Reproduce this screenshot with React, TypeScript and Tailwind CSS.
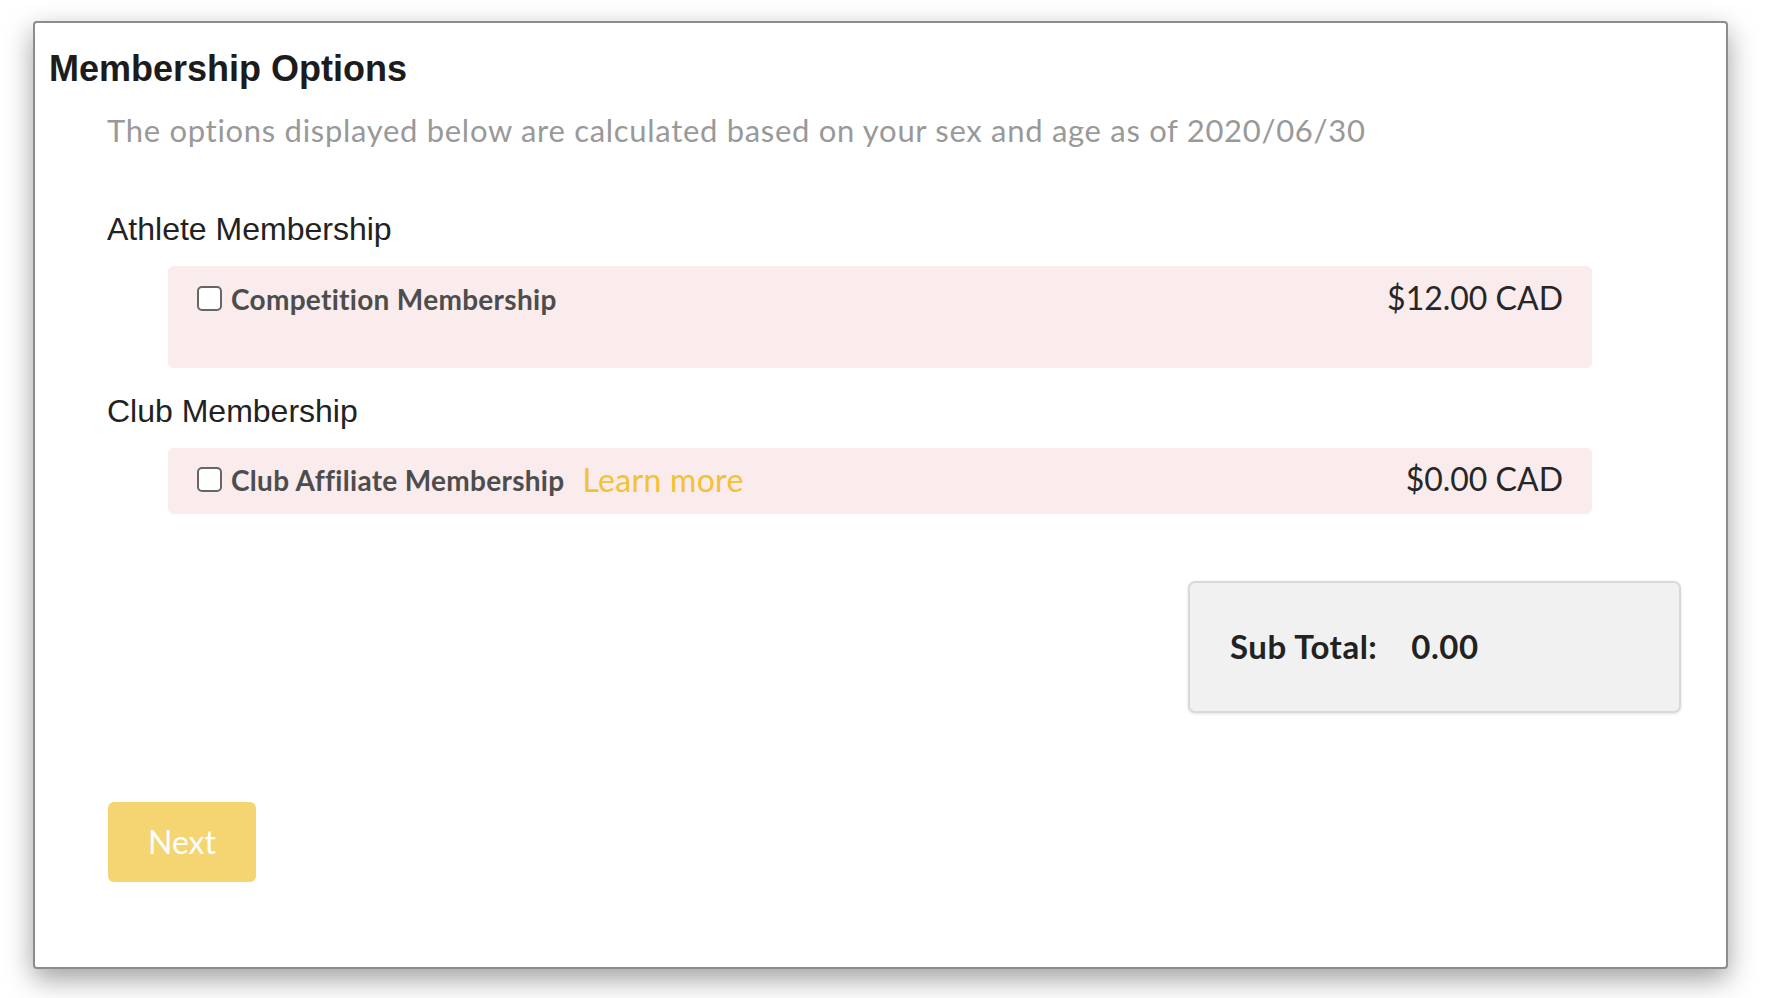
import React, { useState } from "react";

type Option = {
  id: string;
  label: string;
  price: number;
  learnMore?: boolean;
};

const groups: { title: string; options: Option[]; tall?: boolean }[] = [
  {
    title: "Athlete Membership",
    tall: true,
    options: [{ id: "competition", label: "Competition Membership", price: 12 }],
  },
  {
    title: "Club Membership",
    options: [
      { id: "club-affiliate", label: "Club Affiliate Membership", price: 0, learnMore: true },
    ],
  },
];

function Checkbox({ checked, onChange }: { checked: boolean; onChange: () => void }) {
  return (
    <button
      type="button"
      onClick={onChange}
      className="w-[25px] h-[25px] shrink-0 rounded-[5px] border-2 border-[#666] bg-white flex items-center justify-center"
    >
      {checked && (
        <svg width="16" height="16" viewBox="0 0 16 16" fill="none">
          <path d="M3 8.5l3 3 7-7" stroke="#444" strokeWidth="2.2" strokeLinecap="round" strokeLinejoin="round" />
        </svg>
      )}
    </button>
  );
}

export default function App() {
  const [selected, setSelected] = useState<string[]>([]);

  const toggle = (id: string) =>
    setSelected((prev) => (prev.includes(id) ? prev.filter((x) => x !== id) : [...prev, id]));

  const subTotal = groups
    .flatMap((g) => g.options)
    .filter((o) => selected.includes(o.id))
    .reduce((sum, o) => sum + o.price, 0);

  return (
    <div className="min-h-screen bg-white pt-[21px] pl-[33px] pr-[46px] pb-[29px]">
      <div className="w-[1695px] h-[948px] border-2 border-[#8c8c8c] rounded-[4px] bg-white shadow-[0_10px_28px_rgba(0,0,0,0.38)]">
        {/* Header */}
        <h2 className="pl-[14px] pt-[24px] text-[36px] leading-[44px] font-bold text-[#1c1c1c] font-['Liberation_Sans',Arial,sans-serif]">
          Membership Options
        </h2>

        <div className="pl-[72px]">
          <p className="mt-[19px] text-[31px] leading-[40px] tracking-[0.7px] text-[#999] font-['Lato',sans-serif]">
            The options displayed below are calculated based on your sex and age as of 2020/06/30
          </p>

          {groups.map((group, gi) => (
            <div key={group.title} className={gi === 0 ? "mt-[59px]" : "mt-[23px]"}>
              <h3 className="text-[32px] leading-[40px] text-[#222] font-['Liberation_Sans',Arial,sans-serif]">
                {group.title}
              </h3>

              {group.options.map((opt) => (
                <div
                  key={opt.id}
                  className={
                    "ml-[61px] mr-[134px] mt-[17px] rounded-[6px] bg-[#faebec] px-[29px] " +
                    (group.tall ? "h-[102px] pt-[15px]" : "h-[66px] pt-[14px]")
                  }
                >
                  <div className="flex items-center h-[34px] font-['Lato',sans-serif]">
                    <Checkbox checked={selected.includes(opt.id)} onChange={() => toggle(opt.id)} />
                    <span className="ml-[9px] text-[28px] tracking-[0.3px] font-bold text-[#4d4d4d] mt-[2px]">
                      {opt.label}
                    </span>
                    {opt.learnMore && (
                      <a href="#" className="ml-[18px] text-[32px] tracking-[0.3px] text-[#f2c233] mt-[1px]">
                        Learn more
                      </a>
                    )}
                    <span className="ml-auto text-[32px] text-[#262626]">
                      ${opt.price.toFixed(2)} CAD
                    </span>
                  </div>
                </div>
              ))}
            </div>
          ))}
        </div>

        {/* Totals */}
        <div className="flex justify-end mr-[45px] mt-[67px]">
          <div className="w-[493px] h-[132px] rounded-[7px] border-2 border-[#d9d9d9] bg-[#f1f1f1] shadow-[0_1px_3px_rgba(0,0,0,0.12)] flex items-center pl-[40px] font-['Lato',sans-serif] text-[33px] tracking-[0.5px] font-bold text-[#222]">
            <span>Sub Total:</span>
            <span className="ml-[34px]">{subTotal.toFixed(2)}</span>
          </div>
        </div>

        <div className="pl-[73px] mt-[89px]">
          <button
            type="button"
            className="w-[148px] h-[80px] rounded-[6px] bg-[#f4d572] text-white text-[32px] font-['Lato',sans-serif]"
          >
            Next
          </button>
        </div>
      </div>
    </div>
  );
}
